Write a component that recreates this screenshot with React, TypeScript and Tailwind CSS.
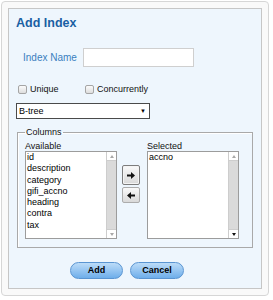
import React from "react";

const available = ["id", "description", "category", "gifi_accno", "heading", "contra", "tax"];
const selected = ["accno"];

const ArrowIcon = ({ dir }: { dir: "left" | "right" }) => (
  <svg width="8" height="7" viewBox="0 0 8 7">
    {dir === "right" ? (
      <>
        <rect x="0" y="2.5" width="5" height="2" fill="#111" />
        <polygon points="4,0 8,3.5 4,7" fill="#111" />
      </>
    ) : (
      <>
        <rect x="3" y="2.5" width="5" height="2" fill="#111" />
        <polygon points="4,0 0,3.5 4,7" fill="#111" />
      </>
    )}
  </svg>
);

const Scrollbar = ({ downDark }: { downDark?: boolean }) => (
  <div className="flex h-full w-[10px] shrink-0 flex-col border-l border-[#cdcdcd] bg-[#dadada]">
    <div className="flex h-[9px] items-center justify-center border-b border-[#cdcdcd] bg-white">
      <div className="h-0 w-0 border-x-[2.5px] border-b-[3px] border-x-transparent border-b-[#a8a8a8]" />
    </div>
    <div className="flex-1" />
    <div className="flex h-[9px] items-center justify-center border-t border-[#cdcdcd] bg-white">
      <div
        className={`h-0 w-0 border-x-[2.5px] border-t-[3px] border-x-transparent ${
          downDark ? "border-t-[#111]" : "border-t-[#a8a8a8]"
        }`}
      />
    </div>
  </div>
);

const ListBox = ({ items, downDark }: { items: string[]; downDark?: boolean }) => (
  <div className="flex h-[88px] w-[92px] border border-[#9c9c9c] bg-white">
    <div className="flex-1 overflow-hidden pl-[1px] text-[9px] leading-[11.3px] text-black">
      {items.map((it) => (
        <div key={it}>{it}</div>
      ))}
    </div>
    <Scrollbar downDark={downDark} />
  </div>
);

const Checkbox = ({ label, width }: { label: string; width?: string }) => (
  <label className={`flex items-center gap-[3px] ${width ?? ""}`}>
    <span className="block h-[9px] w-[9px] rounded-[2px] border border-[#a5a5a5] bg-gradient-to-b from-[#fbfbfb] to-[#dedede]" />
    <span className="text-[9px] leading-[10px] text-[#111]">{label}</span>
  </label>
);

export default function App() {
  return (
    <div
      className="ml-[1px] mt-[1px] h-[295px] w-[268px] rounded-[4px] border border-[#d6d6d6] bg-[#f9f9f9] p-[6px]"
      style={{ fontFamily: '"Liberation Sans", Arial, sans-serif' }}
    >
      <div className="h-full border border-[#c6c6c6] bg-[#eef6fd] pt-[7px]">
        <h2 className="pl-[7px] text-[12.5px] font-bold leading-[14px] text-[#1a5fa3]">Add Index</h2>

        <div className="mt-[18px] flex items-center pl-[14px]">
          <span className="text-[10px] leading-[12px] text-[#3a7fbf]">Index Name</span>
          <div className="ml-[6px] h-[19px] w-[111px] border border-[#cfcfcf] bg-white" />
        </div>

        <div className="mt-[17px] flex items-center pl-[9px]">
          <Checkbox label="Unique" width="w-[67px]" />
          <Checkbox label="Concurrently" />
        </div>

        <div className="ml-[7px] mt-[9px] flex h-[16px] w-[134px] items-center justify-between border border-[#4a4a4a] bg-white pl-[2px] pr-[3px]">
          <span className="text-[9px] leading-[10px] text-black">B-tree</span>
          <span className="text-[6px] leading-[6px] text-black">▼</span>
        </div>

        <fieldset className="ml-[8px] mt-[8px] w-[236px] border border-[#a9a9a9] pb-[8px] pl-[7px] pr-[12px] pt-[3px] shadow-[inset_1px_1px_0_#fff]">
          <legend className="px-[1px] text-[9px] leading-[11px] text-[#111]">Columns</legend>
          <div className="flex">
            <div>
              <div className="text-[9px] leading-[10px] text-[#111]">Available</div>
              <ListBox items={available} />
            </div>
            <div className="ml-[5px] mr-[7px] mt-[24px] flex flex-col gap-[2px]">
              <button
                type="button"
                className="flex h-[20px] w-[18px] items-center justify-center rounded-[2px] border border-[#7d7d7d] bg-gradient-to-b from-[#fafafa] to-[#d9d9d9] shadow-[inset_0_0_0_1px_#f4f4f4]"
              >
                <ArrowIcon dir="right" />
              </button>
              <button
                type="button"
                className="flex h-[16px] w-[18px] items-center justify-center rounded-[2px] border border-[#acacac] bg-gradient-to-b from-[#fafafa] to-[#d9d9d9]"
              >
                <ArrowIcon dir="left" />
              </button>
            </div>
            <div>
              <div className="text-[9px] leading-[10px] text-[#111]">Selected</div>
              <ListBox items={selected} downDark />
            </div>
          </div>
        </fieldset>

        <div className="mt-[14px] flex gap-[7px] pl-[61px]">
          <button
            type="button"
            className="h-[17px] w-[53px] rounded-full border border-[#5a95d2] bg-gradient-to-b from-[#bcdcf8] to-[#6eaeea] text-[9px] font-bold leading-[15px] text-black"
          >
            Add
          </button>
          <button
            type="button"
            className="h-[17px] w-[54px] rounded-full border border-[#5a95d2] bg-gradient-to-b from-[#bcdcf8] to-[#6eaeea] text-[9px] font-bold leading-[15px] text-black"
          >
            Cancel
          </button>
        </div>
      </div>
    </div>
  );
}
